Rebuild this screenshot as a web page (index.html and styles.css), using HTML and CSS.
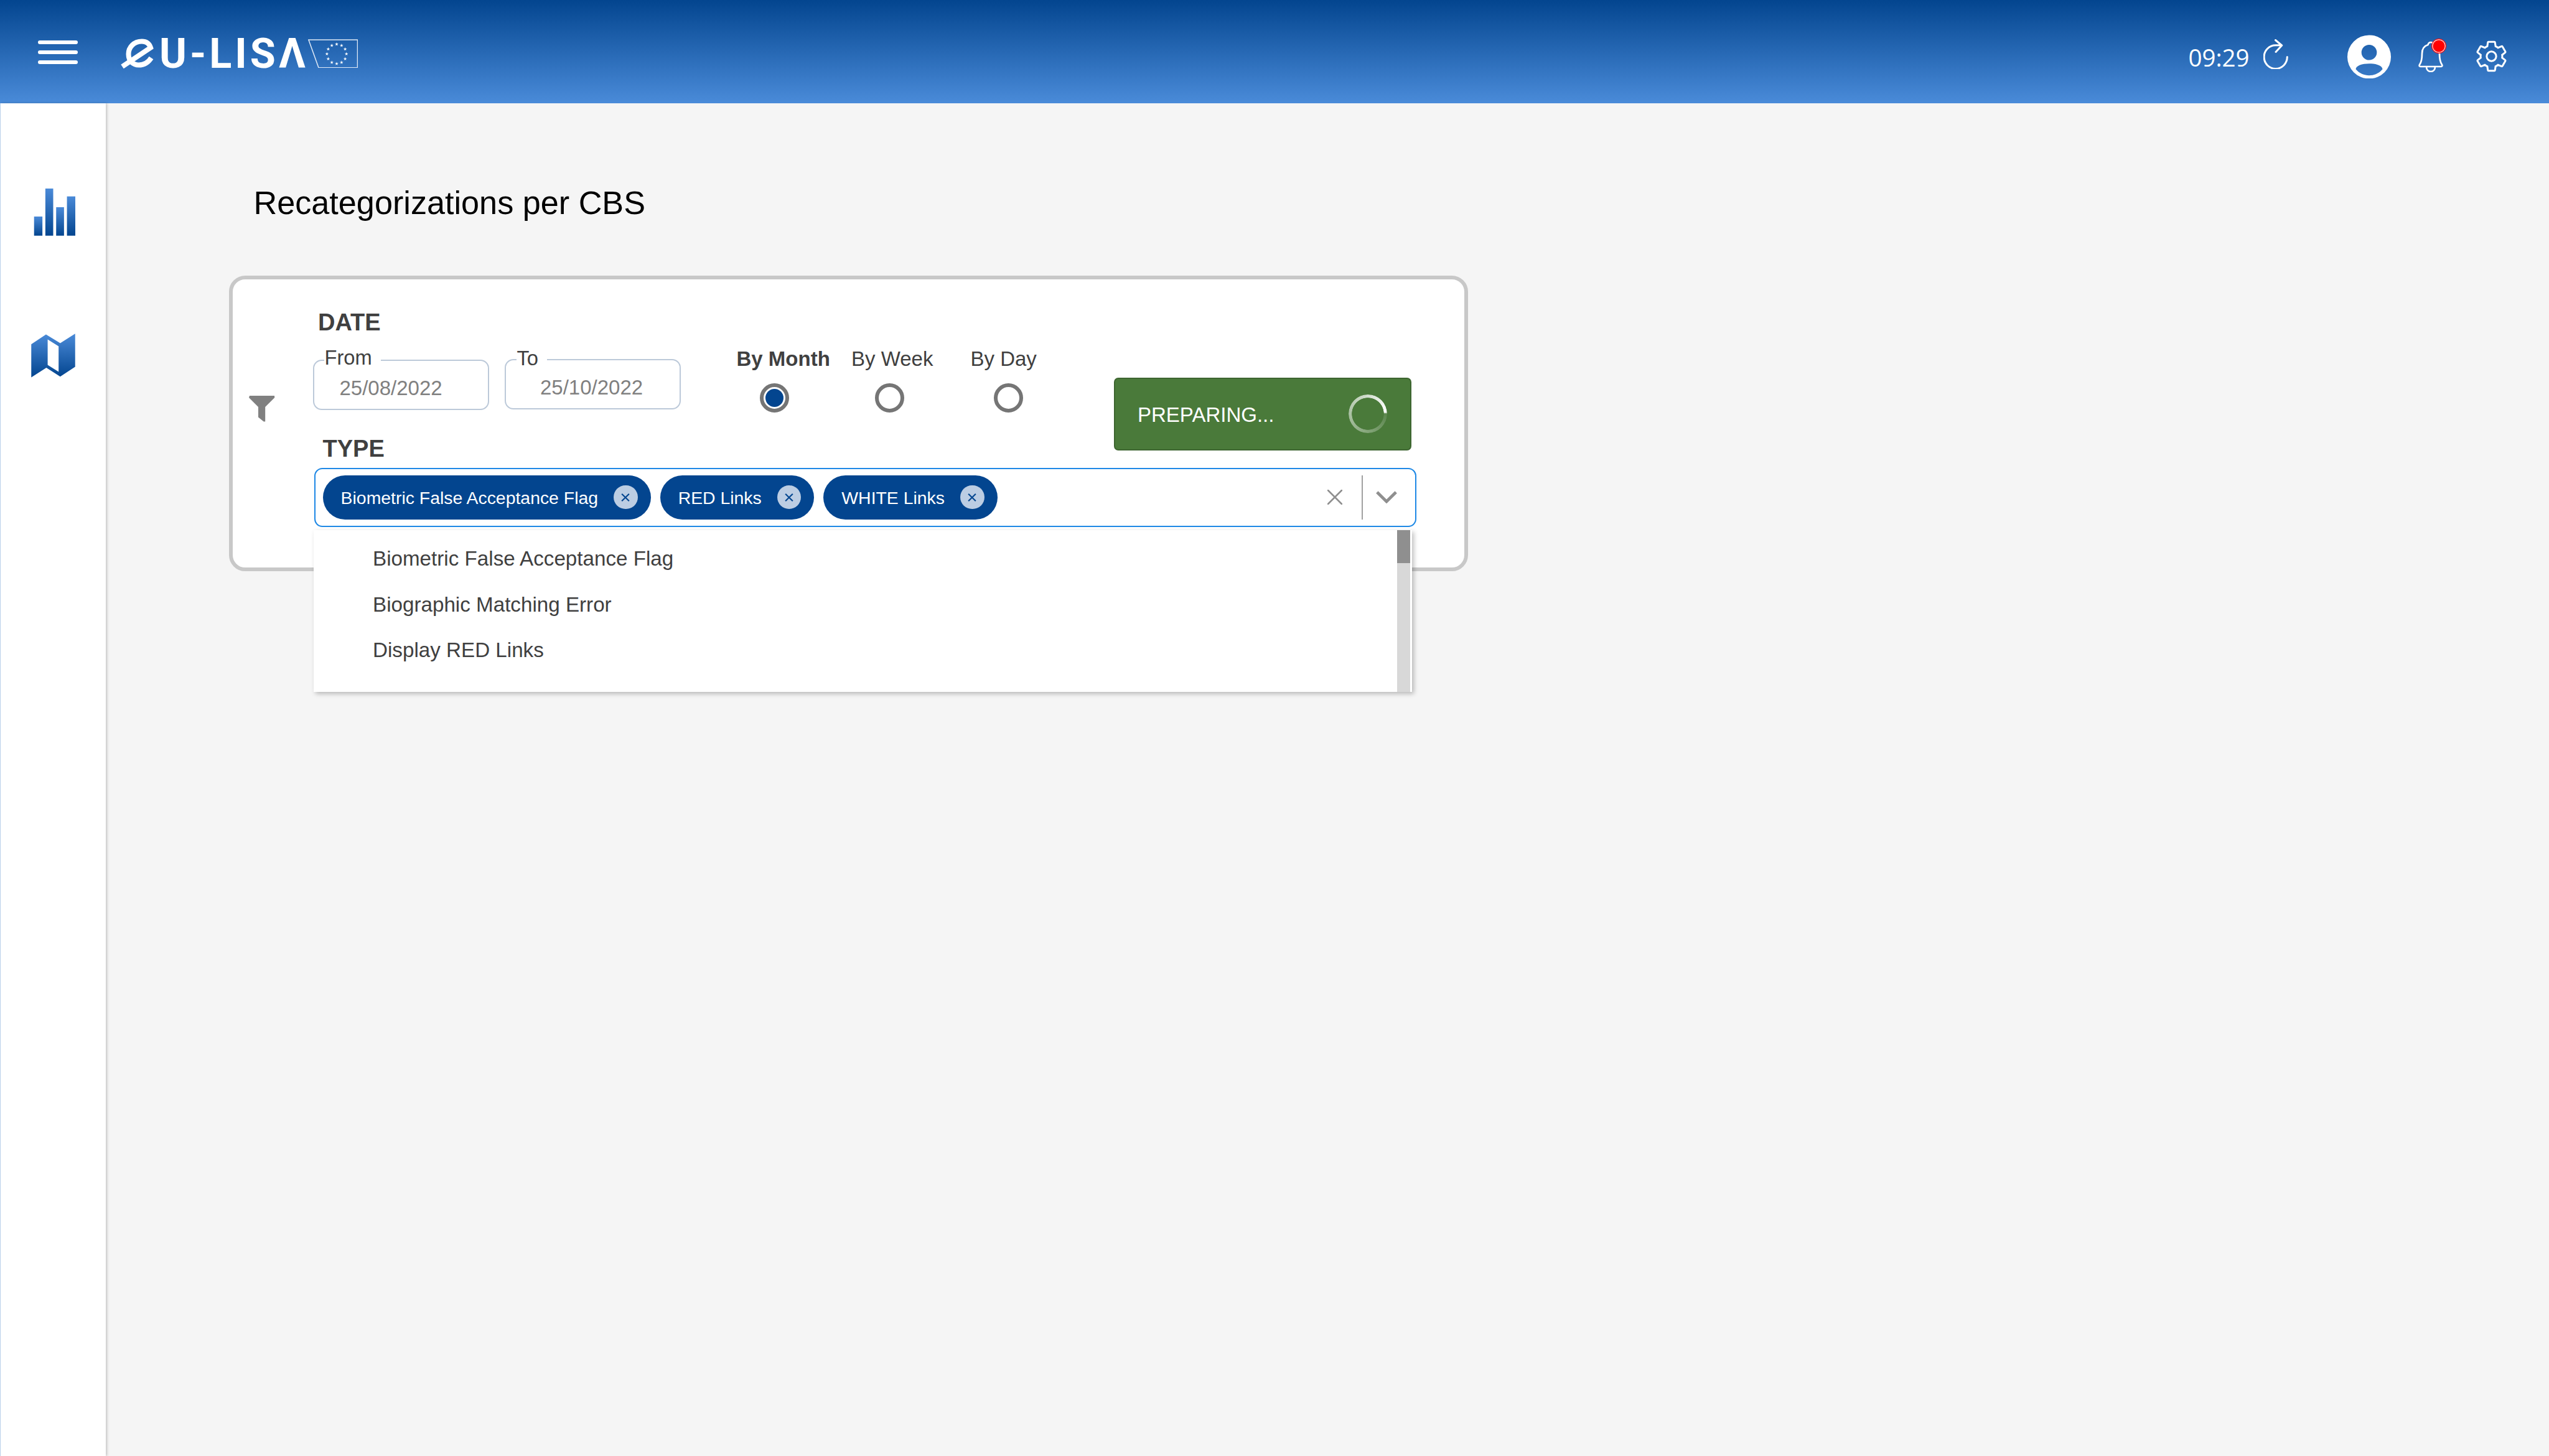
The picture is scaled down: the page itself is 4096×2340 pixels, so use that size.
FILE: index.html
```html
<!DOCTYPE html>
<html lang="en">
<head>
<meta charset="utf-8">
<title>Recategorizations per CBS</title>
<link rel="stylesheet" href="styles.css">
</head>
<body>
<svg class="defs" width="0" height="0" aria-hidden="true">
  <defs>
    <linearGradient id="blueUp" x1="0" y1="0" x2="0" y2="1">
      <stop offset="0" stop-color="#4a8ad8"/>
      <stop offset="1" stop-color="#03458f"/>
    </linearGradient>
    <polygon id="star" points="0,-3 .7,-.9 2.85,-.9 1.1,.35 1.75,2.4 0,1.15 -1.75,2.4 -1.1,.35 -2.85,-.9 -.7,-.9" fill="#fff"/>
  </defs>
</svg>
<header class="topbar">
  <div class="hamburger"><span></span><span></span><span></span></div>
  <div class="logo">
    <svg class="logo-e" viewBox="0 0 55 49"><path d="M3.5 45 L49 14.5 C46.500 7 41 4.500 35 4.500 C22 4.500 13.500 14 13.500 25 C13.500 36 21 42.500 30 42.500 C39 42.500 45.500 38 50 31" fill="none" stroke="#fff" stroke-width="8"/></svg>
    <span class="logo-text">U-LIS&#923;</span>
    <svg class="logo-flag" viewBox="0 0 80.200 46.600">
      <polygon points="0.900,1 79.500,1 79.500,45.800 17,45.800" fill="none" stroke="#dfe9f6" stroke-width="1.500"/>
      <use href="#star" x="46" y="8"/><use href="#star" x="53.850" y="10.100"/><use href="#star" x="59.600" y="15.850"/><use href="#star" x="61.700" y="23.700"/><use href="#star" x="59.600" y="31.550"/><use href="#star" x="53.850" y="37.300"/><use href="#star" x="46" y="39.400"/><use href="#star" x="38.150" y="37.300"/><use href="#star" x="32.400" y="31.550"/><use href="#star" x="30.300" y="23.700"/><use href="#star" x="32.400" y="15.850"/><use href="#star" x="38.150" y="10.100"/>
    </svg>
  </div>
  <div class="top-tools">
    <span class="clock">09:29</span>
    <svg class="ic-refresh" viewBox="0 0 40 48"><path d="M38.300 28.600 A18.600 18.900 0 1 1 19.700 9.700 H29 M19.500 1.500 L29.700 10 L20 20.500" fill="none" stroke="#fff" stroke-width="3" stroke-linecap="round" stroke-linejoin="round"/></svg>
    <svg class="ic-user" viewBox="0 0 88 89"><path fill="#fff" fill-rule="evenodd" d="M44 0.500 A44 44 0 1 1 44 88.500 A44 44 0 1 1 44 0.500Z M44 20 A15.500 15.500 0 1 0 44 51 A15.500 15.500 0 1 0 44 20Z M17 69.500 C24 78 34 82 44 82 C54 82 64 78 71 69.500 C71 62 58 58 44 58 C30 58 17 62 17 69.500Z"/></svg>
    <div class="bell-wrap">
      <svg class="ic-bell" viewBox="0 0 44 50"><path d="M22 2 C19 2 18 4 17.500 6 C11 8 8 13 8 20 C8 30 7 34 4 38 C3 40 4 41 6 41 H38 C40 41 41 40 40 38 C37 34 36 30 36 20 C36 13 33 8 26.500 6 C26 4 25 2 22 2Z M15 41 C15 46 18 49 22 49 C26 49 29 46 29 41" fill="none" stroke="#fff" stroke-width="2.700"/></svg>
      <span class="bell-dot"></span>
    </div>
    <svg class="ic-gear" viewBox="1 1 22 22"><path d="M19.430 12.980c.04-.32.07-.64.07-.98 0-.34-.03-.66-.07-.98l2.110-1.650c.19-.15.24-.42.12-.64l-2-3.460c-.09-.16-.26-.25-.44-.25-.06 0-.12.01-.17.03l-2.490 1c-.52-.4-1.080-.73-1.690-.98l-.38-2.650C14.460 2.180 14.250 2 14 2h-4c-.25 0-.46.18-.49.42l-.38 2.650c-.61.25-1.170.59-1.690.98l-2.490-1c-.06-.02-.12-.03-.18-.03-.17 0-.34.09-.43.25l-2 3.460c-.13.22-.07.49.12.64l2.110 1.650c-.04.32-.07.65-.07.98 0 .33.03.66.07.98l-2.110 1.650c-.19.15-.24.42-.12.64l2 3.460c.09.16.26.25.44.25.06 0 .12-.01.17-.03l2.490-1c.52.4 1.080.73 1.690.98l.38 2.650c.03.24.24.42.49.42h4c.25 0 .46-.18.49-.42l.38-2.650c.61-.25 1.170-.59 1.690-.98l2.490 1c.06.02.12.03.18.03.17 0 .34-.09.43-.25l2-3.460c.12-.22.07-.49-.12-.64l-2.110-1.650z" fill="none" stroke="#fff" stroke-width="1.300"/><circle cx="12" cy="12" r="3.300" fill="none" stroke="#fff" stroke-width="1.300"/></svg>
  </div>
</header>
<div class="shell">
  <nav class="sidebar">
    <svg class="nav-bars" viewBox="63 384 90 96">
      <rect x="69" y="441" width="17" height="39" fill="url(#blueUp)"/>
      <rect x="92" y="384" width="16" height="96" fill="url(#blueUp)"/>
      <rect x="114" y="422" width="16" height="58" fill="url(#blueUp)"/>
      <rect x="136" y="400" width="17" height="80" fill="url(#blueUp)"/>
    </svg>
    <svg class="nav-map" viewBox="63 678 90 89.500">
      <path fill="url(#blueUp)" fill-rule="evenodd" d="M63.300 700 L93.300 680 L122.300 697.700 L152.700 678.300 L152.700 745.700 L122.300 765.700 L94 747.700 L63.300 767.300Z M96.700 690 L96.700 742 L119 756 L119 704Z"/>
    </svg>
  </nav>
  <main class="main">
    <h1 class="page-title">Recategorizations per CBS</h1>
    <section class="card">
      <svg class="filter-icon" viewBox="0 0 42 42"><polygon points="1,0 41,0 41.300,3 26.200,18 26.200,41.500 23.700,41.500 15,34.600 15,18 0,3" fill="#808080"/></svg>
      <div class="form">
        <div class="filter-top">
          <div class="date-col">
            <div class="section-label">DATE</div>
            <div class="date-row">
              <div class="date-field from">
                <span class="float-label">From</span>
                <span class="date-value">25/08/2022</span>
              </div>
              <div class="date-field to">
                <span class="float-label">To</span>
                <span class="date-value">25/10/2022</span>
              </div>
            </div>
            <div class="section-label type-label">TYPE</div>
          </div>
          <div class="action-col">
            <div class="radio-group">
              <div class="radio-item"><span class="radio-label selected">By Month</span><span class="radio checked"></span></div>
              <div class="radio-item"><span class="radio-label">By Week</span><span class="radio"></span></div>
              <div class="radio-item"><span class="radio-label">By Day</span><span class="radio"></span></div>
            </div>
            <div class="prepare-btn"><span class="btn-text">PREPARING...</span><span class="spinner"></span></div>
          </div>
        </div>
        <div class="select-box">
          <div class="chip"><span class="chip-text">Biometric False Acceptance Flag</span><span class="chip-x"><svg viewBox="0 0 16 16"><path d="M2.500 2.500 L13.500 13.500 M13.500 2.500 L2.500 13.500" stroke="#03458f" stroke-width="2" fill="none"/></svg></span></div>
          <div class="chip"><span class="chip-text">RED Links</span><span class="chip-x"><svg viewBox="0 0 16 16"><path d="M2.500 2.500 L13.500 13.500 M13.500 2.500 L2.500 13.500" stroke="#03458f" stroke-width="2" fill="none"/></svg></span></div>
          <div class="chip"><span class="chip-text">WHITE Links</span><span class="chip-x"><svg viewBox="0 0 16 16"><path d="M2.500 2.500 L13.500 13.500 M13.500 2.500 L2.500 13.500" stroke="#03458f" stroke-width="2" fill="none"/></svg></span></div>
          <div class="select-tools">
            <svg class="clear-x" viewBox="0 0 24 24"><path d="M1 1 L23 23 M23 1 L1 23" stroke="#8f8f8f" stroke-width="2.600" stroke-linecap="round" fill="none"/></svg>
            <span class="select-divider"></span>
            <svg class="chevron" viewBox="0 0 34 20"><path d="M1.800 2 L17 17 L32.200 2" stroke="#8f8f8f" stroke-width="4.800" fill="none"/></svg>
          </div>
        </div>
      </div>
      <div class="dropdown">
        <ul class="options">
          <li>Biometric False Acceptance Flag</li>
          <li>Biographic Matching Error</li>
          <li>Display RED Links</li>
        </ul>
        <div class="scrollbar"><div class="scroll-thumb"></div></div>
      </div>
    </section>
  </main>
</div>
</body>
</html>
```
FILE: styles.css
```css
* { box-sizing: border-box; }
html, body { margin: 0; padding: 0; }
body {
  width: 4096px;
  height: 2340px;
  overflow: hidden;
  background: #f5f5f5;
  font-family: "Liberation Sans", Arial, sans-serif;
  color: #404040;
  display: flex;
  flex-direction: column;
}
.defs { position: absolute; }

/* top bar */
.topbar {
  height: 166px;
  flex: none;
  display: flex;
  align-items: center;
  padding: 0 67.4px 0 60.5px;
  background: linear-gradient(180deg, #03458f 0%, #4a8bd9 100%);
}
.hamburger {
  width: 64.5px;
  height: 38.500px;
  margin: 2px 0 0;
  display: flex;
  flex-direction: column;
  justify-content: space-between;
}
.hamburger span { height: 6px; border-radius: 3px; background: #fff; }
.logo {
  margin: 6px 0 0 68px;
  display: flex;
  align-items: center;
}
.logo-e { width: 55px; height: 49px; flex: none; }
.logo-text {
  margin-left: 8px;
  width: 239px;
  font-family: Roboto, sans-serif;
  font-weight: 700;
  font-size: 66.700px;
  letter-spacing: 5px;
  line-height: 50px;
  color: #fff;
  white-space: nowrap;
}
.logo-flag { width: 80.200px; height: 46.600px; flex: none; }
.top-tools {
  margin: 16px 0 0 auto;
  display: flex;
  align-items: center;
}
.clock {
  font-family: "Open Sans", sans-serif;
  font-weight: 500;
  font-size: 38.500px;
  line-height: 44px;
  padding-top: 2px;
  margin-left: -2px;
  color: #fff;
}
.ic-refresh { width: 40px; height: 48px; margin: 0 0 7px 22px; }
.ic-user { width: 70px; height: 70.800px; margin-left: 95px; }
.bell-wrap { position: relative; width: 44px; height: 50px; margin-left: 42px; }
.ic-bell { display: block; width: 44px; height: 50px; }
.bell-dot {
  position: absolute;
  left: 23px;
  top: -3.500px;
  width: 24px;
  height: 24px;
  border-radius: 50%;
  background: #ff0000;
  border: 1.600px solid #ff0000;
  box-shadow: inset 0 0 0 1.500px #f3c8c8;
}
.ic-gear { width: 51px; height: 51px; margin-left: 50px; }

/* shell */
.shell { flex: 1; display: flex; min-height: 0; }
.sidebar {
  width: 170px;
  flex: none;
  background: #fff;
  border-left: 1.500px solid #b9d0ea;
  box-shadow: 2px 0 4px rgba(0, 0, 0, .2);
  padding: 137.400px 0 0 48.500px;
  display: flex;
  flex-direction: column;
  align-items: flex-start;
  gap: 157px;
}
.nav-bars { width: 71px; height: 75.800px; }
.nav-map { width: 71px; height: 70.600px; }
.main { flex: 1; padding: 130px 0 0 198px; }
.page-title {
  margin: 0 0 86.500px 39.500px;
  font-size: 52.200px;
  line-height: 60px;
  font-weight: 400;
  color: #000;
}

/* filter card */
.card {
  position: relative;
  width: 1990.500px;
  display: flex;
  align-items: flex-start;
  padding: 49.500px 0 65px 26px;
  background: #fff;
  border: 6px solid #c8c8c8;
  border-top-width: 6.300px;
  border-bottom-width: 6.300px;
  border-radius: 26px;
}
.filter-icon { width: 42px; height: 42px; margin: 137.500px 60.500px 0 0; flex: none; }
.form { width: 1773px; flex: none; }
.filter-top { display: flex; }
.date-col { width: 591px; flex: none; }
.section-label {
  font-size: 38px;
  line-height: 36px;
  font-weight: 700;
  padding: 2px 0 0 8.500px;
}
.type-label { margin-top: 41.500px; padding-left: 16px; }
.date-row { margin-top: 40.500px; display: flex; gap: 25px; align-items: flex-start; }
.date-field {
  position: relative;
  width: 283px;
  height: 81px;
  border: 2px solid #bcc9d9;
  border-radius: 14px;
  display: flex;
  align-items: center;
  padding-top: 11px;
  font-size: 33px;
}
.date-field.from { margin-top: 1.500px; padding-left: 41px; }
.date-field.to { padding-left: 55.500px; }
.float-label {
  position: absolute;
  top: -22px;
  left: 17px;
  line-height: 38px;
  font-size: 32.700px;
  background: #fff;
  padding: 0 14px 0 1px;
}
.date-field.from .float-label { top: -24px; left: 16px; }
.date-value { color: #808080; }

.action-col { flex: 1; display: flex; align-items: flex-start; }
.radio-group {
  margin: 59px 0 0 90px;
  display: grid;
  grid-template-columns: 184.500px 191.500px auto;
}
.radio-item { display: flex; flex-direction: column; align-items: flex-start; }
.radio-label { font-size: 33px; line-height: 40px; white-space: nowrap; }
.radio-label.selected { font-weight: 700; }
.radio {
  width: 47px;
  height: 47px;
  margin: 19px 0 0 37.500px;
  border: 6px solid #757575;
  border-radius: 50%;
  display: block;
}
.radio-item:nth-child(2) .radio { margin-left: 37.500px; }
.radio.checked {
  background: #03458f;
  background-clip: content-box;
  padding: 3px;
}
.prepare-btn {
  margin: 108.500px 7.500px 0 auto;
  width: 478px;
  height: 117.500px;
  background: #4a7a3a;
  border: 2.500px solid #3d6530;
  border-radius: 7px;
  display: flex;
  align-items: center;
  justify-content: space-between;
  padding: 0 37px 0 36px;
  color: #fff;
  font-size: 33px;
}
.btn-text { padding-top: 3px; }
.spinner {
  width: 62px;
  height: 62px;
  border-radius: 50%;
  background: conic-gradient(from 90deg, rgba(255, 255, 255, .1) 0deg, rgba(255, 255, 255, .4) 120deg, rgba(255, 255, 255, .7) 250deg, #fff 355deg, rgba(255, 255, 255, .1) 360deg);
  -webkit-mask: radial-gradient(closest-side, transparent 82%, #000 84%);
  mask: radial-gradient(closest-side, transparent 82%, #000 84%);
}

/* multi select */
.select-box {
  margin: 13px 0 0 2.500px;
  width: 1770.500px;
  height: 95px;
  border: 2.400px solid #1e88e5;
  border-radius: 13px;
  display: flex;
  align-items: center;
  gap: 15px;
  padding: 0 28.500px 0 11.600px;
}
.chip {
  height: 71px;
  border-radius: 35.500px;
  background: #03458f;
  color: #fff;
  font-size: 28.400px;
  display: flex;
  align-items: center;
  gap: 25px;
  padding: 0 21px 0 29px;
  white-space: nowrap;
}
.chip-text { padding-top: 3.500px; }
.chip-x {
  width: 38.600px;
  height: 38.600px;
  border-radius: 50%;
  background: #bccde3;
  display: flex;
  align-items: center;
  justify-content: center;
}
.chip-x svg { width: 18px; height: 17px; }
.select-tools { margin-left: auto; display: flex; align-items: center; }
.clear-x { width: 24px; height: 24px; }
.select-divider { width: 2.400px; height: 71px; margin: 0 21px 0 31px; background: #a0a0a0; }
.chevron { width: 34px; height: 20px; }

/* open dropdown, over the card */
.dropdown {
  position: absolute;
  left: 130px;
  top: 403px;
  width: 1764.600px;
  height: 260.600px;
  background: #fff;
  box-shadow: 3px 3px 7px rgba(0, 0, 0, .25);
  display: flex;
}
.options {
  flex: 1;
  margin: 0;
  padding: 9.500px 0 0 95px;
  list-style: none;
  font-size: 33.200px;
}
.options li { height: 73.500px; line-height: 73.500px; }
.scrollbar { width: 21.400px; margin-right: 2.600px; background: #d8d8d8; }
.scroll-thumb { height: 53px; background: #8f8f8f; }
```
